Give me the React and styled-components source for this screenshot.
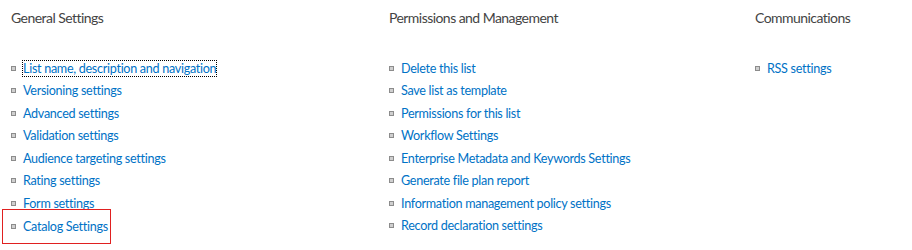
import React from "react";
import styled, { createGlobalStyle } from "styled-components";

const Global = createGlobalStyle`
  html, body { margin: 0; padding: 0; background: #fff; }
  body { font-family: "Lato", "Open Sans", sans-serif; }
`;

const Page = styled.div`
  display: grid;
  grid-template-columns: 378px 366px 1fr;
  padding: 9px 0 0 11px;
  width: 912px;
  height: 250px;
  box-sizing: border-box;
  overflow: hidden;
`;

const Column = styled.section`
  display: flex;
  flex-direction: column;
`;

const Heading = styled.h3`
  margin: 0;
  font-weight: 400;
  font-size: 14px;
  letter-spacing: -0.55px;
  line-height: 18px;
  color: #444;
  height: 48px;
`;

const List = styled.ul`
  list-style: none;
  margin: 0;
  padding: 0;
  display: flex;
  flex-direction: column;
`;

const Item = styled.li`
  display: flex;
  align-items: center;
  height: 22.5px;
  gap: 7px;
  ${(p) =>
    p.$highlight &&
    `
    border: 1px solid #e02020;
    margin-left: -9px;
    padding-left: 8px;
    width: 99px;
    height: 33px;
    margin-top: -5.5px;
  `}
`;

const Bullet = styled.span`
  width: 5px;
  height: 5px;
  flex: none;
  box-sizing: border-box;
  border: 1px solid #8c8c8c;
  background: #cfcfcf;
`;

const Link = styled.a`
  font-size: 12.6px;
  letter-spacing: -0.3px;
  color: #0072c6;
  text-decoration: none;
  white-space: nowrap;
  line-height: 15px;
  outline: ${(p) => (p.$focused ? "1px dotted #000" : "none")};
  outline-offset: 0px;
`;

const columns = [
  {
    title: "General Settings",
    items: [
      "List name, description and navigation",
      "Versioning settings",
      "Advanced settings",
      "Validation settings",
      "Audience targeting settings",
      "Rating settings",
      "Form settings",
      "Catalog Settings",
    ],
  },
  {
    title: "Permissions and Management",
    items: [
      "Delete this list",
      "Save list as template",
      "Permissions for this list",
      "Workflow Settings",
      "Enterprise Metadata and Keywords Settings",
      "Generate file plan report",
      "Information management policy settings",
      "Record declaration settings",
    ],
  },
  {
    title: "Communications",
    items: ["RSS settings"],
  },
];

export default function App() {
  return (
    <>
      <Global />
      <Page>
        {columns.map((col) => (
          <Column key={col.title}>
            <Heading>{col.title}</Heading>
            <List>
              {col.items.map((it) => (
                <Item key={it} $highlight={it === "Catalog Settings"}>
                  <Bullet />
                  <Link
                    href="#"
                    $focused={it === "List name, description and navigation"}
                  >
                    {it}
                  </Link>
                </Item>
              ))}
            </List>
          </Column>
        ))}
      </Page>
    </>
  );
}
